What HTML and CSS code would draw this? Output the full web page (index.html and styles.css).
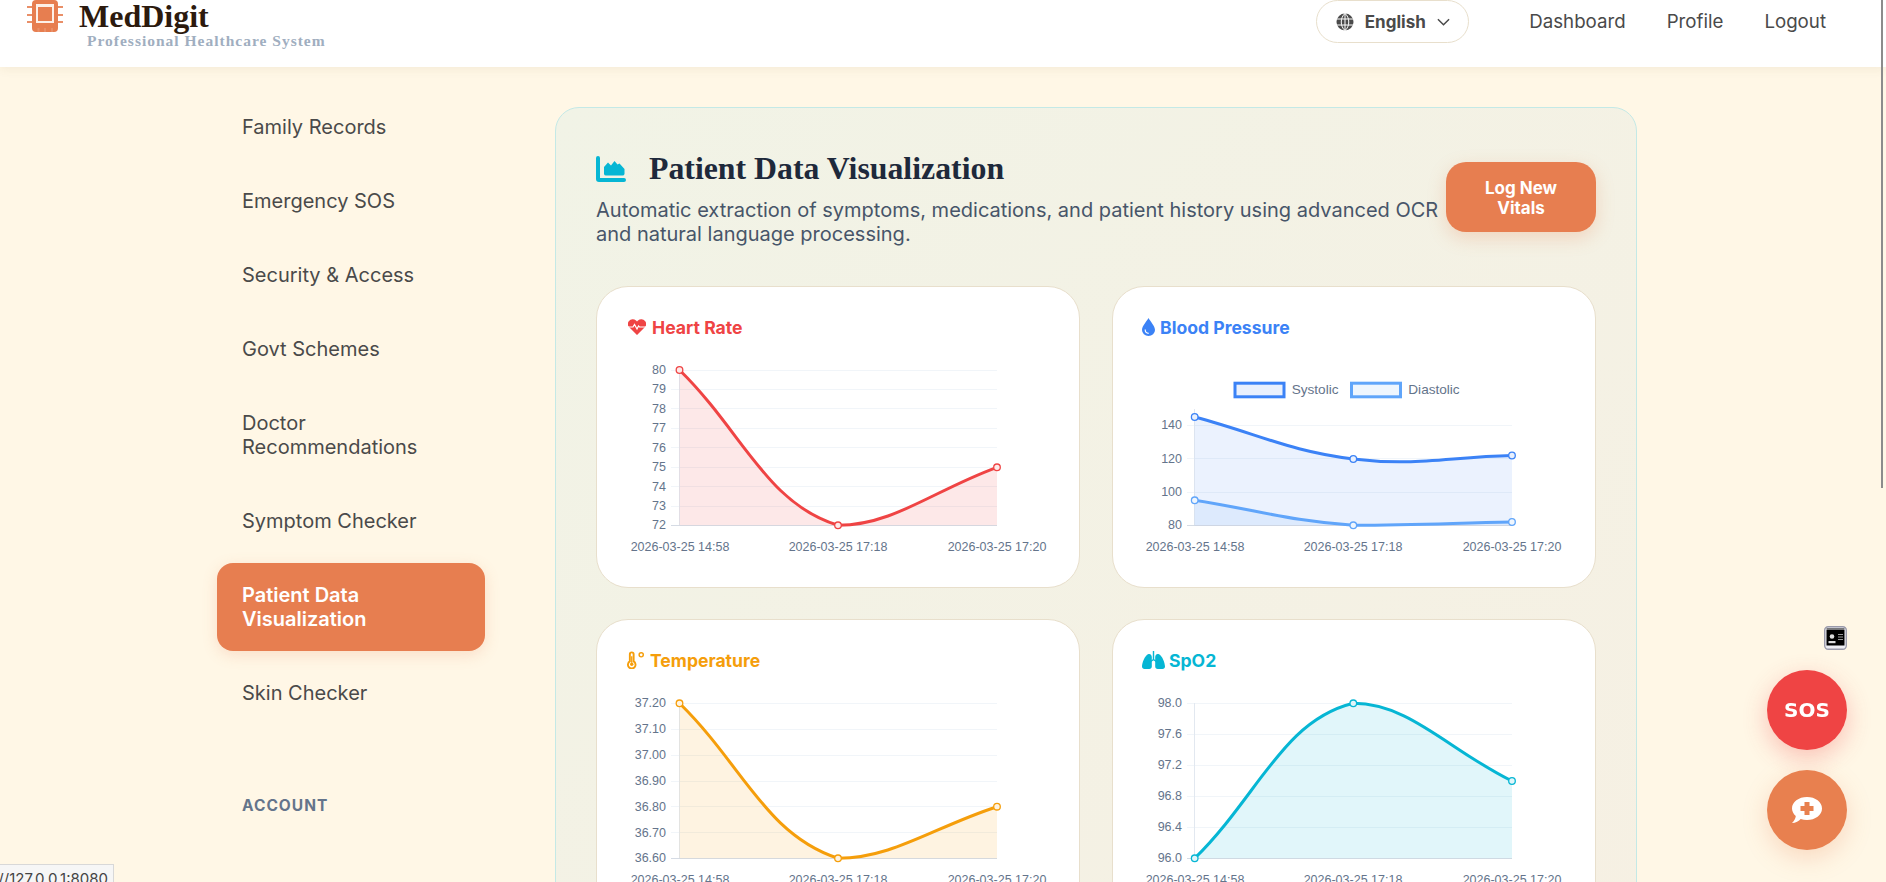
FILE: index.html
```html
<!DOCTYPE html>
<html lang="en">

<head>
  <meta charset="UTF-8">
  <meta name="viewport" content="width=device-width, initial-scale=1.0">
  <title>MedDigit - Patient Data Visualization</title>
  <link rel="stylesheet" href="styles.css">
</head>

<body>
  <header class="navbar">
    <a class="brand" href="#">
      <svg class="brand-icon" viewBox="0 4 36 32">
        <path fill="#e77e50" d="M9 4h18a4 4 0 0 1 4 4v24a4 4 0 0 1-4 4H9a4 4 0 0 1-4-4V8a4 4 0 0 1 4-4z" />
        <path fill="#e98f68" d="M0 10h5v2H0zM0 18h5v2H0zM0 25h5v2H0zM31 10h5v2h-5zM31 18h5v2h-5zM31 25h5v2h-5zM10.500 32h2v4h-2zM17 32h2v4h-2zM24 32h2v4h-2z" />
        <rect x="9" y="8" width="18" height="19" fill="#fdf0e8" />
        <rect x="11" y="11" width="14" height="14" fill="#e77e50" />
      </svg>
      <span class="brand-text">
        <span class="brand-name">MedDigit</span>
        <span class="brand-sub">Professional Healthcare System</span>
      </span>
    </a>
    <div class="nav-right">
      <button class="lang-btn">
        <svg class="globe" viewBox="0 0 18 18">
          <circle cx="9" cy="9" r="8.500" fill="#4a4a4a" />
          <path fill="none" stroke="#fff" stroke-width="1" d="M0 6h18M0 12h18M9 0v18M9 .5c-5 4-5 13 0 17M9 .5c5 4 5 13 0 17" />
        </svg>
        English
        <svg class="chevron" viewBox="0 0 14 8">
          <path fill="none" stroke="#4a4a4a" stroke-width="1.600" d="M1 1l6 6 6-6" />
        </svg>
      </button>
      <nav class="nav-links">
        <a href="#">Dashboard</a>
        <a href="#">Profile</a>
        <a href="#">Logout</a>
      </nav>
    </div>
  </header>

  <div class="layout">
    <aside class="sidebar">
      <a class="side-link" href="#">Family Records</a>
      <a class="side-link" href="#">Emergency SOS</a>
      <a class="side-link" href="#">Security &amp; Access</a>
      <a class="side-link" href="#">Govt Schemes</a>
      <a class="side-link" href="#">Doctor Recommendations</a>
      <a class="side-link" href="#">Symptom Checker</a>
      <a class="side-link active" href="#">Patient Data Visualization</a>
      <a class="side-link" href="#">Skin Checker</a>
      <div class="side-label">ACCOUNT</div>
    </aside>

    <main class="panel">
      <div class="panel-head">
        <div class="panel-text">
          <h1>
            <svg class="title-icon" viewBox="0 0 30 26">
              <path fill="#06b6d4" d="M0 2a2 2 0 0 1 4 0v20h24a2 2 0 0 1 0 4H3a3 3 0 0 1-3-3z" />
              <path fill="#06b6d4" d="M8 18.500V11l4-4.500 3 3 3.500-4.500 3 3.500 2-1 5 5.500v5a2 2 0 0 1-2 1.500H10a2 2 0 0 1-2-1.500z" />
            </svg>
            Patient Data Visualization
          </h1>
          <p>Automatic extraction of symptoms, medications, and patient history using advanced OCR and natural language processing.</p>
        </div>
        <button class="log-btn">Log New Vitals</button>
      </div>

      <div class="charts">
        <section class="card">
          <h3 class="card-title red">
            <svg class="card-icon" viewBox="0 0 18 16">
              <path fill="currentColor" d="M9 16L1.500 8.500A4.800 4.800 0 0 1 1 2 4.800 4.800 0 0 1 8 1.500L9 2.500l1-1A4.800 4.800 0 0 1 17 2a4.800 4.800 0 0 1-.5 6.500z" />
              <path fill="none" stroke="#fff" stroke-width="1.200" d="M0 8h5l1.500-2.500L9 10l1.500-3 1 1H18" />
            </svg>
            Heart Rate
          </h3>
          <svg class="chart" viewBox="0 0 418 200">
            <g class="grid">
              <path d="M42 15.500h326M42 34.500h326M42 53.500h326M42 73.500h326M42 92.500h326M42 112.500h326M42 131.500h326M42 151.500h326" />
            </g>
            <path class="axis" d="M50.500 15v155" />
            <path class="base" d="M42 170.500h326" />
            <path class="area" fill="#ef4444" d="M50.500 15C113.900 77.100 137 148.200 209 170.300C264 170.300 304.400 135.500 368 112.300L368 170.300L50.500 170.300Z" />
            <path class="line" stroke="#ef4444" d="M50.500 15C113.900 77.100 137 148.200 209 170.300C264 170.300 304.400 135.500 368 112.300" />
            <g class="dots" stroke="#ef4444" fill="#fdeaea">
              <circle cx="50.500" cy="15" r="3.300" />
              <circle cx="209" cy="170.300" r="3.300" />
              <circle cx="368" cy="112.300" r="3.300" />
            </g>
            <g class="ticks-y">
              <text x="37" y="19">80</text>
              <text x="37" y="38.400">79</text>
              <text x="37" y="57.800">78</text>
              <text x="37" y="77.200">77</text>
              <text x="37" y="96.700">76</text>
              <text x="37" y="116.100">75</text>
              <text x="37" y="135.500">74</text>
              <text x="37" y="154.900">73</text>
              <text x="37" y="174.300">72</text>
            </g>
            <g class="ticks-x">
              <text x="51" y="196">2026-03-25 14:58</text>
              <text x="209" y="196">2026-03-25 17:18</text>
              <text x="368" y="196">2026-03-25 17:20</text>
            </g>
          </svg>
        </section>

        <section class="card">
          <h3 class="card-title blue">
            <svg class="card-icon drop" viewBox="0 0 13 18">
              <path fill="currentColor" d="M6.500 0C8 3 13 8 13 12a6.500 6 0 0 1-13 0C0 8 5 3 6.500 0z" />
              <path fill="none" stroke="#fff" stroke-width="1.200" d="M3.200 11.500c0 2.500 1.500 3.800 3.500 3.800" />
            </svg>
            Blood Pressure
          </h3>
          <svg class="chart" viewBox="0 0 418 200">
            <g class="legend">
              <rect x="90" y="28.200" width="49" height="13.600" fill="#e9f0fd" stroke="#3b82f6" stroke-width="3" />
              <text x="146.700" y="38.500">Systolic</text>
              <rect x="206.500" y="28.200" width="49" height="13.600" fill="#eff6fe" stroke="#60a5fa" stroke-width="3" />
              <text x="263.300" y="38.500">Diastolic</text>
            </g>
            <g class="grid">
              <path d="M42 70.500h325M42 103.500h325M42 137.500h325" />
            </g>
            <path class="axis" d="M49.500 54v116" />
            <path class="base" d="M42 170.500h325" />
            <path class="area soft" fill="#3b82f6" d="M49.700 62C113.100 78.800 143.800 96.200 208.300 104C270.700 111.600 303.500 101.900 367 100.500L367 170.300L49.700 170.300Z" />
            <path class="area soft" fill="#60a5fa" d="M49.700 145.300C113.100 155.300 144.500 165.900 208.300 170.300C271.400 170.300 303.500 168.300 367 167L367 170.300L49.700 170.300Z" />
            <path class="line" stroke="#3b82f6" d="M49.700 62C113.100 78.800 143.800 96.200 208.300 104C270.700 111.600 303.500 101.900 367 100.500" />
            <path class="line" stroke="#60a5fa" d="M49.700 145.300C113.100 155.300 144.500 165.900 208.300 170.300C271.400 170.300 303.500 168.300 367 167" />
            <g class="dots" stroke="#3b82f6" fill="#e9f0fd">
              <circle cx="49.700" cy="62" r="3.300" />
              <circle cx="208.300" cy="104" r="3.300" />
              <circle cx="367" cy="100.500" r="3.300" />
            </g>
            <g class="dots" stroke="#60a5fa" fill="#eff6fe">
              <circle cx="49.700" cy="145.300" r="3.300" />
              <circle cx="208.300" cy="170.300" r="3.300" />
              <circle cx="367" cy="167" r="3.300" />
            </g>
            <g class="ticks-y">
              <text x="37" y="74">140</text>
              <text x="37" y="107.700">120</text>
              <text x="37" y="141.300">100</text>
              <text x="37" y="174.300">80</text>
            </g>
            <g class="ticks-x">
              <text x="50" y="196">2026-03-25 14:58</text>
              <text x="208" y="196">2026-03-25 17:18</text>
              <text x="367" y="196">2026-03-25 17:20</text>
            </g>
          </svg>
        </section>

        <section class="card">
          <h3 class="card-title orange">
            <svg class="card-icon temp" viewBox="0 0 19 18">
              <path fill="none" stroke="currentColor" stroke-width="2" d="M3 3a2 2 0 0 1 4 0v7.500a4 4 0 1 1-4 0z" />
              <path fill="currentColor" d="M4.300 5h1.400v7h-1.400z" />
              <circle cx="5" cy="13.500" r="1.800" fill="currentColor" />
              <circle cx="15" cy="3.500" r="2.200" fill="none" stroke="currentColor" stroke-width="1.500" />
            </svg>
            Temperature
          </h3>
          <svg class="chart" viewBox="0 0 418 200">
            <g class="grid">
              <path d="M42 15.500h326M42 41.500h326M42 67.500h326M42 93.500h326M42 118.500h326M42 144.500h326" />
            </g>
            <path class="axis" d="M50.500 15v155" />
            <path class="base" d="M42 170.500h326" />
            <path class="area" fill="#f59e0b" d="M50.500 15.300C113.900 77.300 136.600 146.700 209 170.300C263.600 170.300 304.400 139.300 368 118.700L368 170.300L50.500 170.300Z" />
            <path class="line" stroke="#f59e0b" d="M50.500 15.300C113.900 77.300 136.600 146.700 209 170.300C263.600 170.300 304.400 139.300 368 118.700" />
            <g class="dots" stroke="#f59e0b" fill="#fef3e1">
              <circle cx="50.500" cy="15.300" r="3.300" />
              <circle cx="209" cy="170.300" r="3.300" />
              <circle cx="368" cy="118.700" r="3.300" />
            </g>
            <g class="ticks-y">
              <text x="37" y="19.300">37.20</text>
              <text x="37" y="45.100">37.10</text>
              <text x="37" y="71">37.00</text>
              <text x="37" y="96.800">36.90</text>
              <text x="37" y="122.600">36.80</text>
              <text x="37" y="148.500">36.70</text>
              <text x="37" y="174.300">36.60</text>
            </g>
            <g class="ticks-x">
              <text x="51" y="196">2026-03-25 14:58</text>
              <text x="209" y="196">2026-03-25 17:18</text>
              <text x="368" y="196">2026-03-25 17:20</text>
            </g>
          </svg>
        </section>

        <section class="card">
          <h3 class="card-title cyan">
            <svg class="card-icon lungs" viewBox="0 0 23 18">
              <path fill="currentColor" d="M6.500 3C8.500 2.500 9.800 4 9.800 6v9.500c0 1.500-1 2.500-2.500 2.500H2.500C1 18 0 17 0 15.500c0-3 2.500-11 6.500-12.500zM16.500 3C14.500 2.500 13.200 4 13.200 6v9.500c0 1.500 1 2.500 2.500 2.500h4.800c1.500 0 2.500-1 2.500-2.500 0-3-2.500-11-6.500-12.500z" />
              <path fill="none" stroke="currentColor" stroke-width="1.400" d="M11.500 0v8.500l-3.500 2.500M11.500 8.500l3.500 2.500" />
            </svg>
            SpO2
          </h3>
          <svg class="chart" viewBox="0 0 418 200">
            <g class="grid">
              <path d="M42 15.500h325M42 46.500h325M42 77.500h325M42 108.500h325M42 139.500h325" />
            </g>
            <path class="axis" d="M49.500 15v155" />
            <path class="base" d="M42 170.500h325" />
            <path class="area" fill="#06b6d4" d="M49.700 170.300C113.100 108.300 137.700 32.500 208.300 15.300C264.600 15.300 303.500 61.900 367 93L367 170.300L49.700 170.300Z" />
            <path class="line" stroke="#06b6d4" d="M49.700 170.300C113.100 108.300 137.700 32.500 208.300 15.300C264.600 15.300 303.500 61.900 367 93" />
            <g class="dots" stroke="#06b6d4" fill="#e0f6fa">
              <circle cx="49.700" cy="170.300" r="3.300" />
              <circle cx="208.300" cy="15.300" r="3.300" />
              <circle cx="367" cy="93" r="3.300" />
            </g>
            <g class="ticks-y">
              <text x="37" y="19.300">98.0</text>
              <text x="37" y="50.300">97.6</text>
              <text x="37" y="81.300">97.2</text>
              <text x="37" y="112.300">96.8</text>
              <text x="37" y="143.300">96.4</text>
              <text x="37" y="174.300">96.0</text>
            </g>
            <g class="ticks-x">
              <text x="50" y="196">2026-03-25 14:58</text>
              <text x="208" y="196">2026-03-25 17:18</text>
              <text x="367" y="196">2026-03-25 17:20</text>
            </g>
          </svg>
        </section>
      </div>
    </main>
  </div>

  <!-- floating bits -->
  <div class="id-badge">
    <svg viewBox="0 0 23 24">
      <rect x=".7" y=".7" width="21.600" height="22.600" rx="3.500" fill="#eeeef4" stroke="#9a9aaa" stroke-width="1.400" />
      <rect x="2.500" y="4" width="18" height="15.500" fill="#000" />
      <rect x="2.500" y="2.500" width="18" height="1" fill="#000" />
      <circle cx="8" cy="10.500" r="2.300" fill="#ddd" />
      <rect x="4.500" y="15" width="7" height="2.200" fill="#ddd" />
      <path fill="none" stroke="#999" stroke-width="1.200" d="M14 8.500h5M14 11h5M14 13.500h5" />
    </svg>
  </div>
  <button class="fab fab-sos">SOS</button>
  <button class="fab fab-chat">
    <svg viewBox="0 0 30 27">
      <path fill="#fff" d="M15 0c8.300 0 15 4.900 15 11.500S23.300 23 15 23c-2.300 0-4.400-.4-6.300-1-1.800 1.800-5 4-8.700 4 2-1.800 3.500-4.500 3.800-7C1.500 17 0 14.400 0 11.500 0 4.900 6.700 0 15 0z" />
      <path fill="#e8804f" d="M12.500 5h5v4h4v5h-4v4h-5v-4h-4V9h4z" />
    </svg>
  </button>
  <div class="url-tip">http://127.0.0.1:8080</div>
  <div class="scroll-thumb"></div>
</body>

</html>
```

FILE: styles.css
```css
* {
  box-sizing: border-box;
}

html,
body {
  height: 100%;
  overflow: hidden;
}

body {
  margin: 0;
  font-family: Inter, "Noto Sans", sans-serif;
  background-color: #fff7e6;
  color: #4a4a4a;
}

a {
  text-decoration: none;
  color: inherit;
}

button {
  font-family: inherit;
  cursor: pointer;
}

.navbar {
  height: 67px;
  display: flex;
  justify-content: space-between;
  background: #fff;
  box-shadow: 0 2px 10px rgba(120, 90, 40, 0.08);
  padding-left: 27px;
  padding-right: 60px;
  position: relative;
}

.brand {
  display: flex;
  gap: 16px;
  align-items: flex-start;
}

.brand-icon {
  width: 36px;
  height: 32px;
  flex-shrink: 0;
}

.brand-text {
  display: flex;
  flex-direction: column;
}

.brand-name {
  font-family: "Liberation Serif", serif;
  font-weight: 700;
  font-size: 32px;
  line-height: 32px;
  color: #2c1a0e;
}

.brand-sub {
  font-family: "Liberation Serif", serif;
  font-weight: 700;
  font-size: 15.500px;
  line-height: 18px;
  letter-spacing: 1px;
  color: #a0aec0;
  margin-left: 8px;
}

.nav-right {
  display: flex;
  align-items: flex-start;
}

.lang-btn {
  height: 43px;
  width: 153px;
  display: flex;
  align-items: center;
  justify-content: center;
  gap: 11px;
  border: 1px solid #e8dfcc;
  border-radius: 22px;
  background: #fff;
  font-size: 17px;
  font-weight: 700;
  color: #4a4a4a;
  margin-right: 60px;
}

.globe {
  width: 18px;
  height: 18px;
}

.chevron {
  width: 13px;
  height: 8px;
}

.nav-links {
  display: flex;
  gap: 41px;
  height: 43px;
  align-items: center;
  font-size: 18.700px;
}

.layout {
  display: flex;
  gap: 70px;
  padding-top: 28px;
  padding-left: 217px;
}

.sidebar {
  width: 268px;
  flex-shrink: 0;
  display: flex;
  flex-direction: column;
  gap: 10px;
}

.side-link {
  padding: 20px 24px 20px 25px;
  font-size: 20px;
  line-height: 24px;
  border-radius: 16px;
}

.side-link.active {
  background: #e77e50;
  color: #fff;
  font-weight: 600;
  box-shadow: 0 4px 15px rgba(231, 126, 80, 0.2);
}

.side-label {
  margin-top: 61px;
  padding-left: 25px;
  font-size: 15.500px;
  font-weight: 700;
  letter-spacing: 1px;
  color: #64748b;
}

.panel {
  width: 1082px;
  flex-shrink: 0;
  margin-top: 12px;
  padding: 40px;
  border: 1px solid #c4e9e6;
  border-radius: 24px;
  background: linear-gradient(135deg, #f1f3e6, #f6f0e3);
}

.panel-head {
  display: flex;
  align-items: center;
  margin-bottom: 40px;
}

.panel-text {
  flex: 1;
}

.panel-text h1 {
  display: flex;
  align-items: center;
  gap: 23px;
  margin: 0 0 8px;
  height: 42px;
  font-family: "Liberation Serif", serif;
  font-size: 31.800px;
  font-weight: 700;
  color: #1e293b;
}

.title-icon {
  width: 30px;
  height: 26px;
}

.panel-text p {
  margin: 0;
  font-size: 20px;
  line-height: 24px;
  color: #475569;
}

.log-btn {
  width: 150px;
  height: 70px;
  flex-shrink: 0;
  padding: 1px 32px 0;
  border: 0;
  border-radius: 20px;
  background: #e77e50;
  box-shadow: 0 6px 18px rgba(231, 126, 80, 0.25);
  color: #fff;
  font-size: 17px;
  font-weight: 700;
  line-height: 20px;
}

.charts {
  display: grid;
  grid-template-columns: 1fr 1fr;
  column-gap: 32px;
  row-gap: 31px;
}

.card {
  padding: 32px;
  background: #fff;
  border: 1px solid #e8dfcc;
  border-radius: 32px;
}

.card-title {
  display: flex;
  align-items: center;
  gap: 6px;
  height: 16px;
  margin: 0 0 20px -1px;
  font-size: 17.600px;
  font-weight: 700;
}

.card-title.red {
  color: #ef4444;
}

.card-title.blue {
  color: #3b82f6;
  gap: 5px;
  margin-left: -3px;
}

.card-title.orange {
  color: #f59e0b;
  gap: 5px;
  margin-left: -2px;
}

.card-title.cyan {
  color: #06b6d4;
  gap: 4px;
  margin-left: -3px;
}

.card-icon {
  width: 18px;
  height: 16px;
}

.card-icon.drop {
  width: 13px;
  height: 18px;
}

.card-icon.temp {
  width: 18px;
  height: 18px;
}

.card-icon.lungs {
  width: 23px;
  height: 18px;
}

.chart {
  display: block;
  width: 418px;
  height: 200px;
  overflow: visible;
  font-family: "Liberation Sans", Arial, sans-serif;
  font-size: 12.500px;
  fill: #64748b;
}

.grid path {
  fill: none;
  stroke: #f1f5f9;
}

.axis {
  fill: none;
  stroke: #e2e8f0;
}

.base {
  fill: none;
  stroke: #d5dbe4;
}

.area {
  opacity: 0.12;
}

.area.soft {
  opacity: 0.1;
}

.line {
  fill: none;
  stroke-width: 3;
}

.dots circle {
  stroke-width: 1.300;
}

.legend text {
  font-size: 13.600px;
}

.ticks-y text {
  text-anchor: end;
}

.ticks-x text {
  text-anchor: middle;
}

.id-badge {
  position: fixed;
  left: 1824px;
  top: 626px;
  width: 23px;
  height: 24px;
}

.fab {
  position: fixed;
  left: 1767px;
  width: 80px;
  height: 80px;
  border: 0;
  border-radius: 50%;
  display: flex;
  align-items: center;
  justify-content: center;
  color: #fff;
}

.fab-sos {
  top: 670px;
  background: #ef4444;
  font-family: "DejaVu Sans", sans-serif;
  font-weight: 700;
  font-size: 20px;
  box-shadow: 0 8px 25px rgba(239, 68, 68, 0.3);
}

.fab-chat {
  top: 770px;
  background: #e8804f;
  box-shadow: 0 8px 25px rgba(231, 126, 80, 0.25);
}

.fab-chat svg {
  width: 30px;
  height: 27px;
}

.url-tip {
  position: fixed;
  left: -40px;
  top: 864px;
  width: 154px;
  height: 18px;
  overflow: hidden;
  padding: 5px 5px 0 0;
  text-align: right;
  white-space: nowrap;
  background: #f6f6f6;
  border: 1px solid #d8d8d8;
  border-bottom: 0;
  font-size: 15px;
  line-height: 18px;
  color: #444;
}

.scroll-thumb {
  position: fixed;
  right: 3px;
  top: 0;
  width: 2px;
  height: 488px;
  background: #8c8c8c;
}
```
